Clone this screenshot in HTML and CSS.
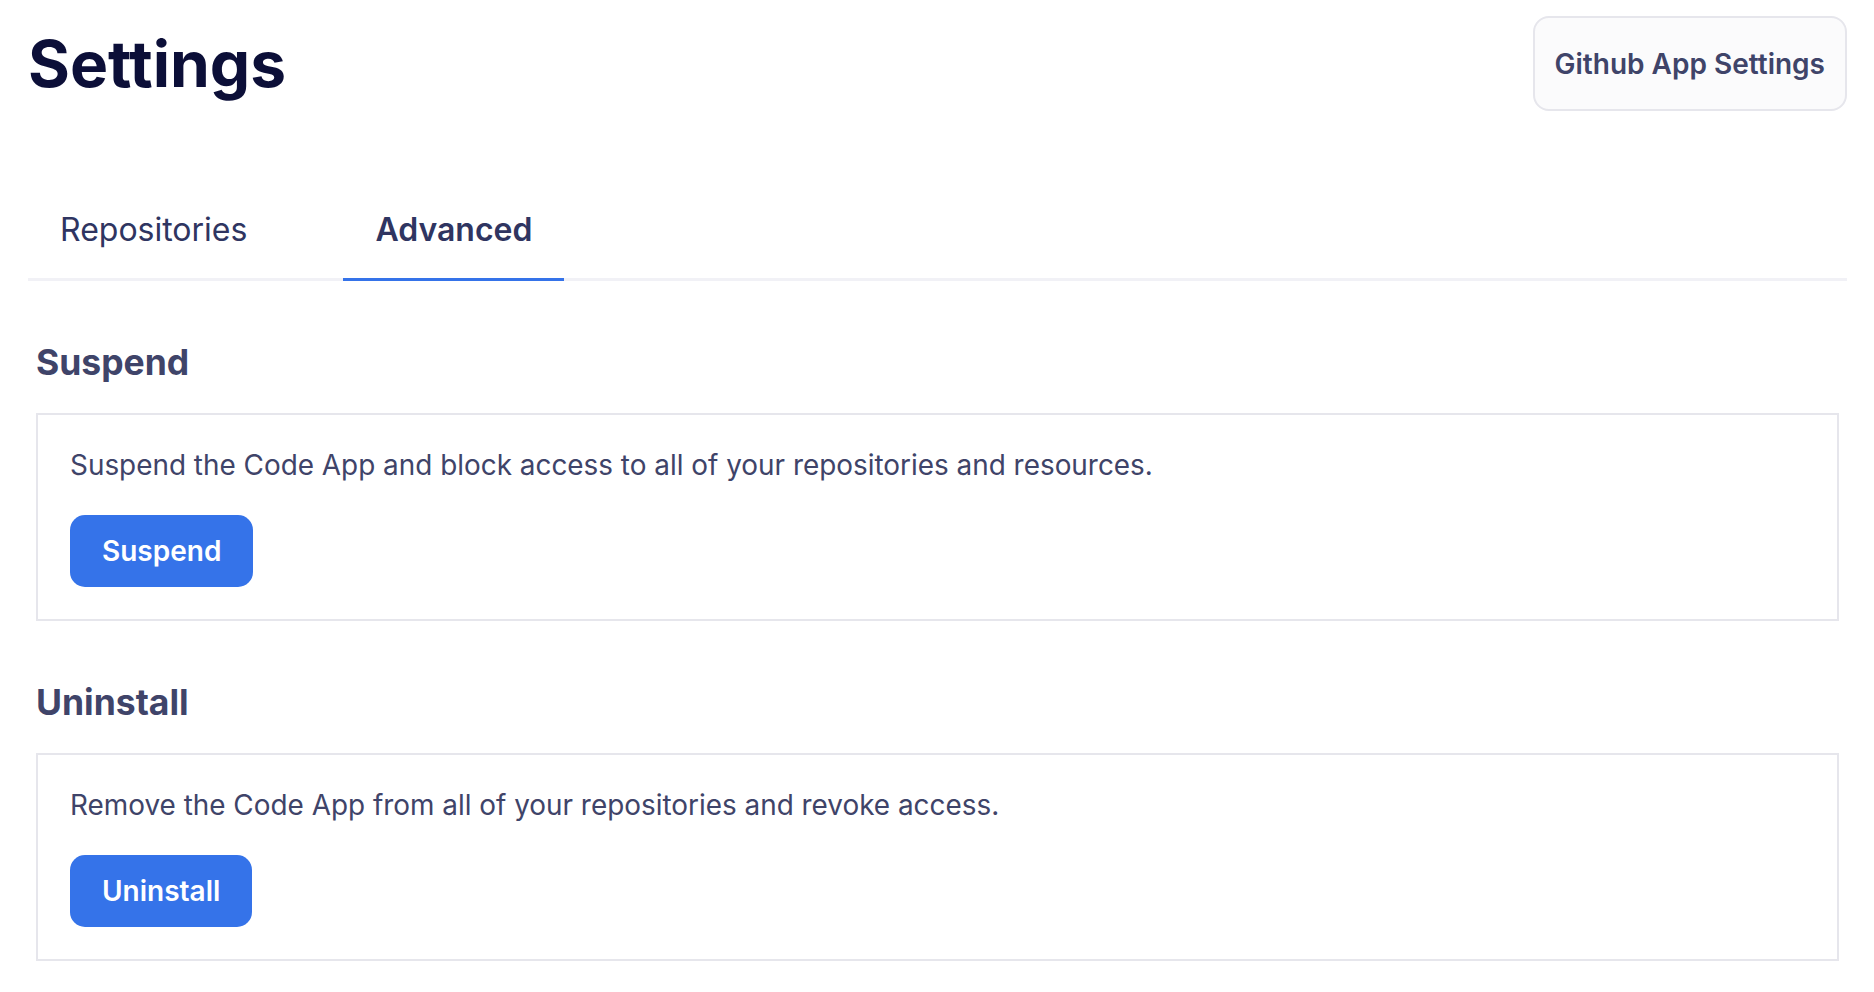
FILE: index.html
```html
<!DOCTYPE html>
<html lang="en">
<head>
<meta charset="utf-8">
<title>Settings</title>
<link rel="stylesheet" href="styles.css">
</head>
<body>
<div class="page">
  <header class="header">
    <h1 class="title">Settings</h1>
    <button class="ghost-btn">Github App Settings</button>
  </header>
  <nav class="tabs">
    <div class="tab">Repositories</div>
    <div class="tab tab-active">Advanced</div>
  </nav>
  <div class="sections">
    <section class="section">
      <h2 class="section-title">Suspend</h2>
      <div class="card">
        <p class="card-text">Suspend the Code App and block access to all of your repositories and resources.</p>
        <button class="primary-btn">Suspend</button>
      </div>
    </section>
    <section class="section">
      <h2 class="section-title">Uninstall</h2>
      <div class="card">
        <p class="card-text">Remove the Code App from all of your repositories and revoke access.</p>
        <button class="primary-btn">Uninstall</button>
      </div>
    </section>
  </div>
</div>
</body>
</html>
```
FILE: styles.css
```css
* { box-sizing: border-box; }
html, body { margin: 0; padding: 0; background: #ffffff; }
body { font-family: Inter, "Noto Sans", sans-serif; color: #3f4469; }

.page { padding: 0 27px 0 28px; }

.header {
  display: flex;
  justify-content: space-between;
  align-items: center;
  padding-top: 16px;
}
.title {
  margin: 0;
  font-size: 64px;
  line-height: 78px;
  font-weight: 700;
  color: #0c0f38;
}
.ghost-btn {
  font-family: Inter, "Noto Sans", sans-serif;
  font-size: 28px;
  line-height: 35px;
  font-weight: 600;
  color: #3f4469;
  background: #fbfbfc;
  border: 2px solid #e6e6ec;
  border-radius: 16px;
  padding: 29px 20px 27px;
}

.tabs {
  display: flex;
  gap: 64px;
  margin-top: 71px;
  border-bottom: 3px solid #f1f1f6;
}
.tab {
  padding: 28px 32px;
  font-size: 32px;
  line-height: 40px;
  color: #2f3561;
  margin-bottom: -3px;
  border-bottom: 3px solid transparent;
}
.tab-active {
  font-weight: 600;
  border-bottom-color: #3573e9;
}

.sections { padding: 0 8px; }
.section-title {
  margin: 60px 0 28px;
  font-size: 35.5px;
  line-height: 44px;
  font-weight: 700;
  color: #3f4469;
}
.card {
  border: 2px solid #e6e6ec;
  padding: 32px;
}
.card-text {
  margin: 0 0 32px;
  font-size: 27.9px;
  line-height: 36px;
  color: #3f4469;
}
.primary-btn {
  font-family: Inter, "Noto Sans", sans-serif;
  font-size: 28px;
  line-height: 36px;
  font-weight: 600;
  color: #ffffff;
  background: #3573e9;
  border: none;
  border-radius: 15px;
  padding: 18px 32px;
}
```
